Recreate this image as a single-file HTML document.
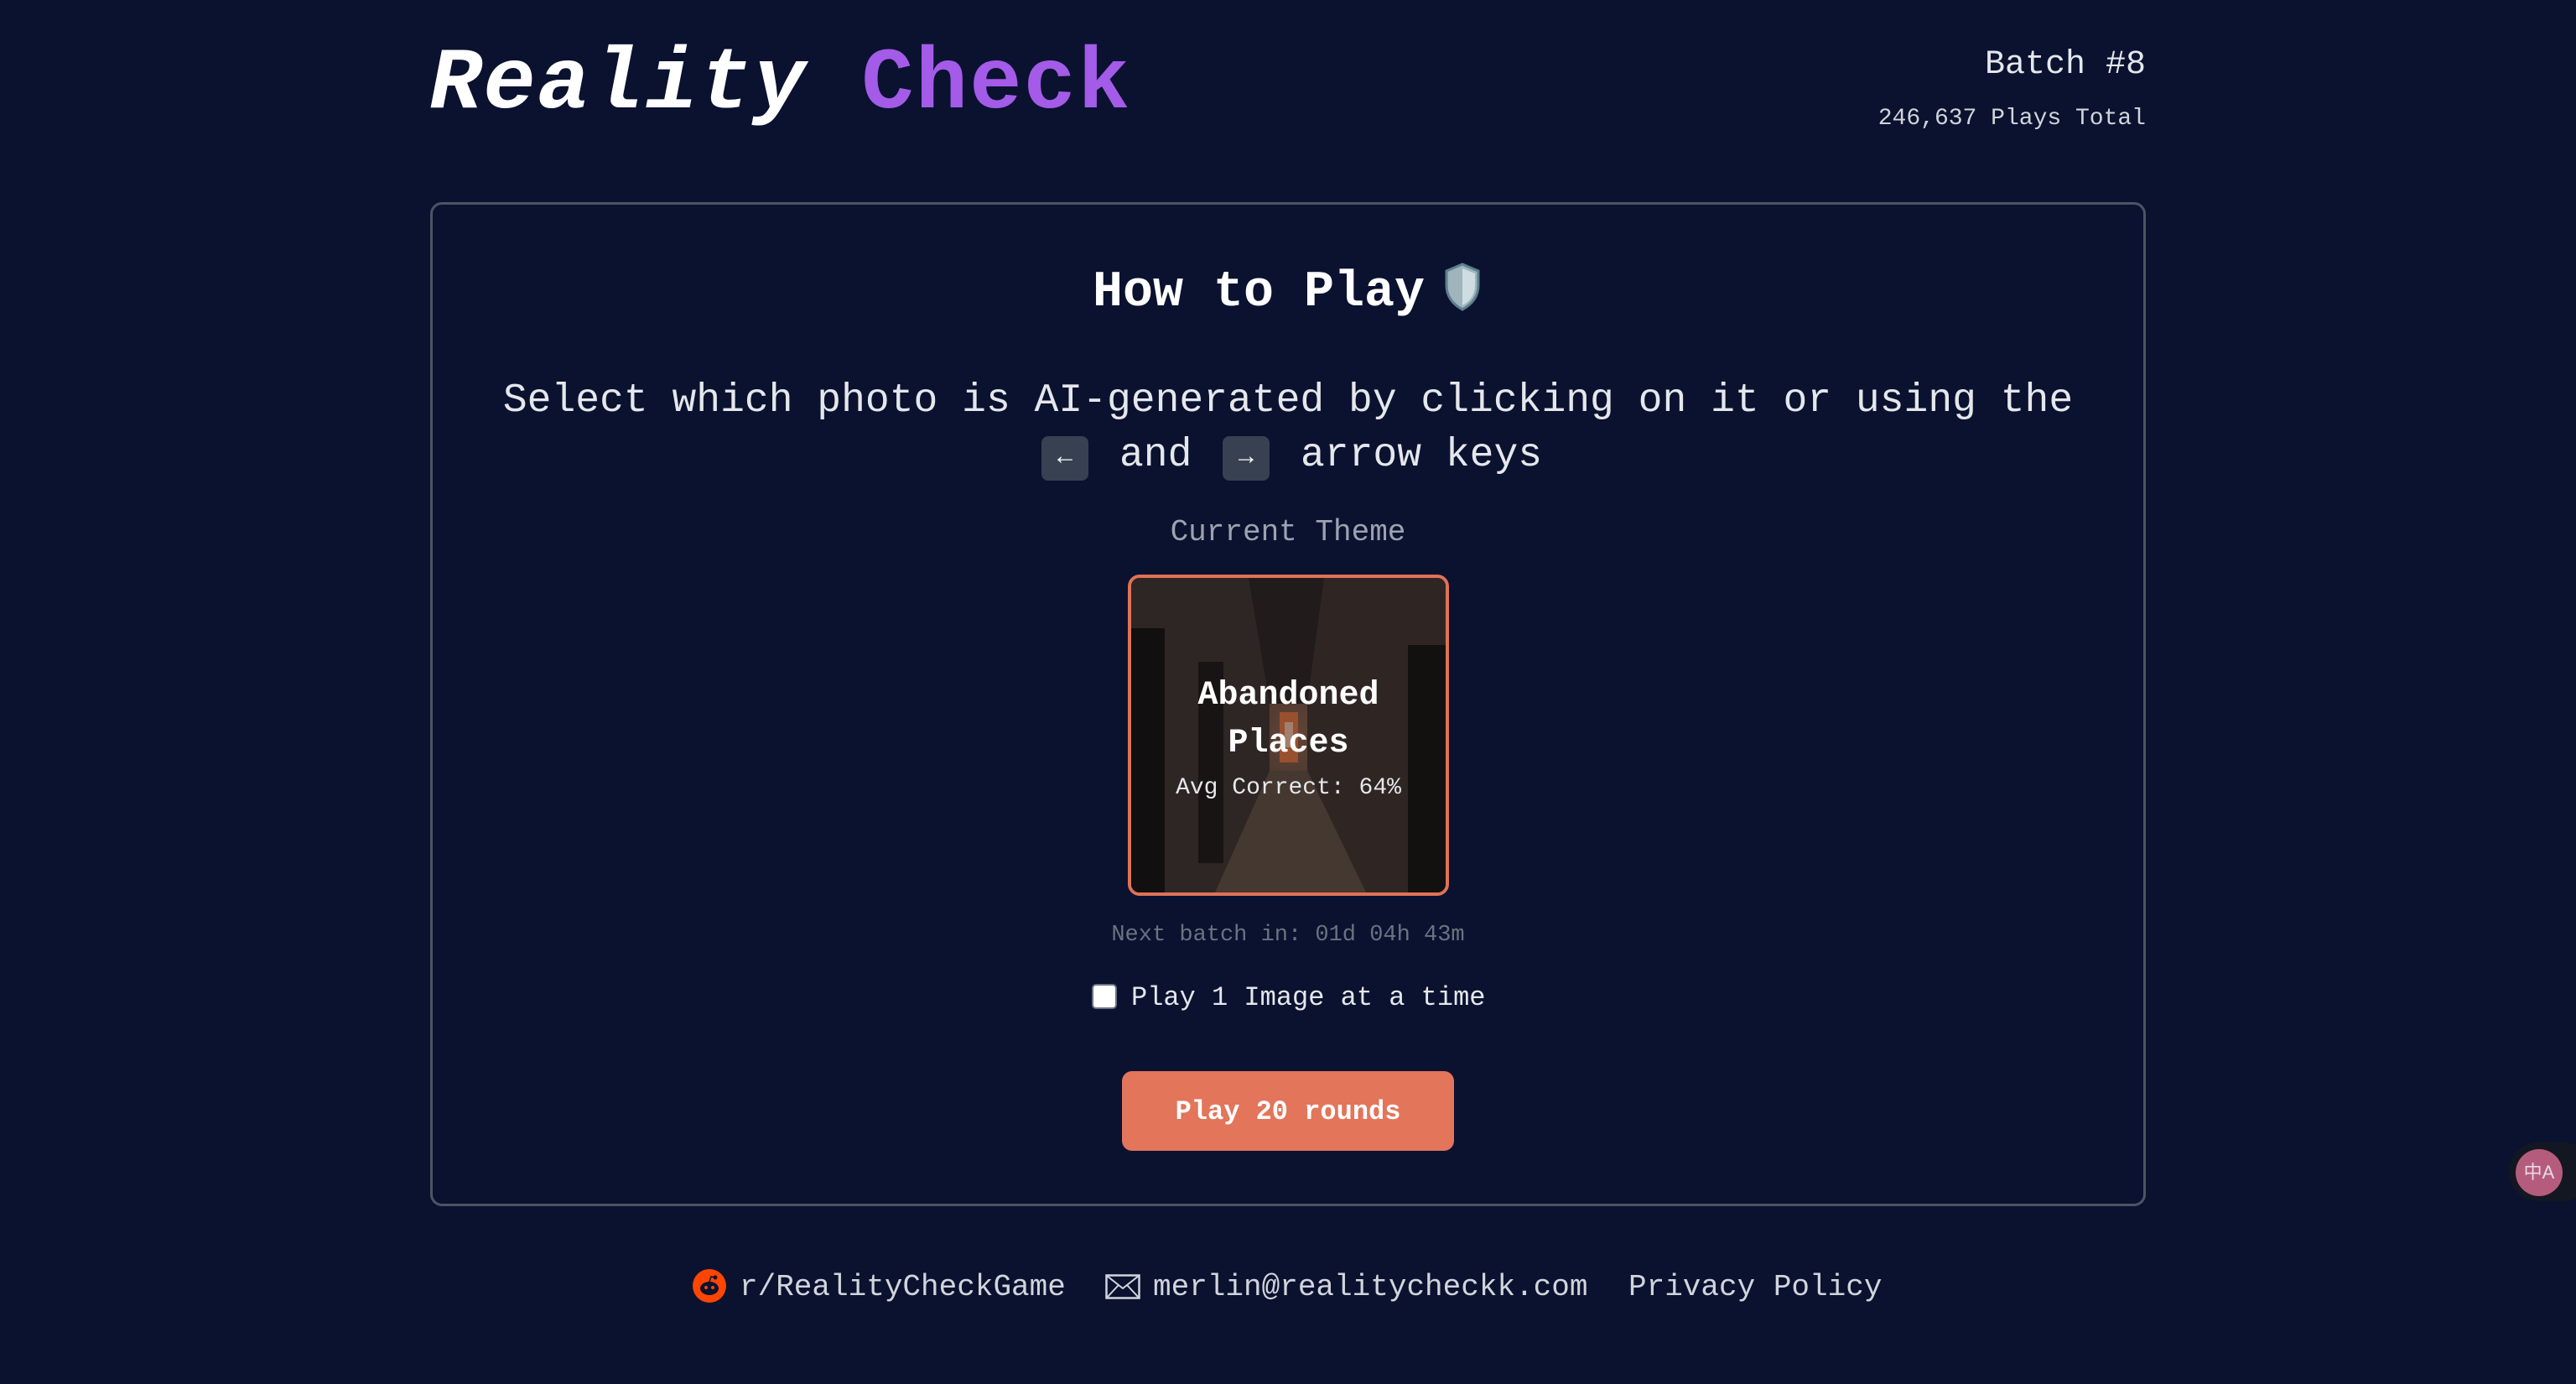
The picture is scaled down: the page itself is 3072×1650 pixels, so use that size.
<!DOCTYPE html>
<html><head><meta charset="utf-8"><style>
*{margin:0;padding:0;box-sizing:border-box}
body{width:3072px;height:1650px;background:#0a1230;font-family:"Liberation Mono",monospace;color:#fff;position:relative;overflow:hidden}
.a{position:absolute;white-space:nowrap}
.c{left:0;width:3072px;text-align:center}
</style></head><body>
<div class="a" style="left:512px;top:36px;font-size:104px;font-weight:bold;font-style:italic;line-height:130px;letter-spacing:2px">Reality <span style="color:#a35be8;font-style:normal">Check</span></div>
<div class="a" style="right:513px;top:52px;font-size:40px;line-height:52px;color:#e5e7eb">Batch #8</div>
<div class="a" style="right:513px;top:124px;font-size:28px;line-height:36px;color:#d1d5db">246,637 Plays Total</div>

<div class="a" style="left:513px;top:241px;width:2046px;height:1197px;border:3px solid #4b5563;border-radius:14px"></div>

<div class="a c" style="top:309px;font-size:60px;font-weight:bold;line-height:80px">How to Play <svg width="50" height="60" viewBox="0 0 50 60" style="vertical-align:-8px;margin-left:-16px"><path d="M25 3 L44 11 L44 28 C44 42 36 51 25 57 C14 51 6 42 6 28 L6 11 Z" fill="#9fb4bd" stroke="#5d7f8c" stroke-width="3"/><path d="M25 8 L40 14 L40 28 C40 40 33 48 25 52 Z" fill="#cfdde2"/></svg></div>
<div class="a c" style="top:446px;font-size:48px;line-height:64px;color:#e5e7eb">Select which photo is AI-generated by clicking on it or using the</div>
<div class="a" style="left:1242px;top:520px;width:56px;height:53px;background:#374151;border-radius:8px;color:#fff;font-size:30px;text-align:center;line-height:53px">←</div>
<div class="a" style="left:1335px;top:511px;font-size:48px;line-height:64px;color:#e5e7eb">and</div>
<div class="a" style="left:1458px;top:520px;width:56px;height:53px;background:#374151;border-radius:8px;color:#fff;font-size:30px;text-align:center;line-height:53px">→</div>
<div class="a" style="left:1551px;top:511px;font-size:48px;line-height:64px;color:#e5e7eb">arrow keys</div>

<div class="a c" style="top:612px;font-size:36px;line-height:46px;color:#9ca3af">Current Theme</div>

<div class="a" style="left:1345px;top:685px;width:383px;height:383px;border:4px solid #e07256;border-radius:14px;overflow:hidden;background:#2a2220">
<svg width="375" height="375" viewBox="0 0 375 375" style="position:absolute;left:0;top:0">
<defs><radialGradient id="g" cx="0.52" cy="0.5" r="0.6"><stop offset="0" stop-color="#7a5646"/><stop offset="0.5" stop-color="#4a3832"/><stop offset="1" stop-color="#1c1818"/></radialGradient></defs>
<rect width="375" height="375" fill="url(#g)"/>
<polygon points="0,0 140,0 165,150 165,230 130,375 0,375" fill="#3a302e"/>
<polygon points="375,0 230,0 210,150 210,230 250,375 375,375" fill="#3b302e"/>
<polygon points="140,0 230,0 210,150 165,150" fill="#2a2222"/>
<polygon points="165,230 210,230 280,375 100,375" fill="#55463c"/>
<rect x="177" y="160" width="22" height="60" fill="#c0643a"/>
<rect x="183" y="172" width="10" height="30" fill="#c8a08a"/>
<rect x="0" y="60" width="40" height="315" fill="#161313"/>
<rect x="80" y="100" width="30" height="240" fill="#1e1919"/>
<rect x="330" y="80" width="45" height="295" fill="#181414"/>
</svg>
<div style="position:absolute;left:0;top:0;width:100%;height:100%;background:rgba(0,0,0,0.2)"></div>
<div style="position:absolute;left:0;width:100%;top:112px;text-align:center;font-size:40px;font-weight:bold;line-height:57px">Abandoned<br>Places</div>
<div style="position:absolute;left:0;width:100%;top:233px;text-align:center;font-size:28px;line-height:36px;color:#e5e7eb">Avg Correct: 64%</div>
</div>

<div class="a c" style="top:1098px;font-size:27px;line-height:34px;color:#6b7280">Next batch in: 01d 04h 43m</div>
<div class="a" style="left:1302px;top:1173px;width:30px;height:30px;background:#fff;border:2px solid #6b7280;border-radius:5px"></div>
<div class="a" style="left:1349px;top:1169px;font-size:32px;line-height:42px;color:#e5e7eb">Play 1 Image at a time</div>
<div class="a" style="left:1338px;top:1277px;width:396px;height:95px;background:#e2755a;border-radius:12px;font-size:32px;font-weight:bold;text-align:center;line-height:97px">Play 20 rounds</div>

<div class="a" style="left:826px;top:1513px;width:40px;height:40px;border-radius:50%;background:#ff4500"><svg width="40" height="40" viewBox="0 0 40 40"><ellipse cx="20" cy="23" rx="11" ry="8" fill="#0a1230"/><circle cx="16" cy="22" r="2" fill="#ff4500"/><circle cx="24" cy="22" r="2" fill="#ff4500"/><circle cx="27" cy="10" r="2.5" fill="#0a1230"/><path d="M20 15 L22 9 L27 10" stroke="#0a1230" stroke-width="1.5" fill="none"/></svg></div>
<div class="a" style="left:882px;top:1511px;font-size:36px;line-height:48px;color:#d1d5db">r/RealityCheckGame</div>
<svg class="a" style="left:1318px;top:1519px" width="42" height="30" viewBox="0 0 42 30"><rect x="1.5" y="1.5" width="39" height="27" fill="none" stroke="#d1d5db" stroke-width="2.5"/><path d="M2 2 L21 17 L40 2 M2 28 L16 13 M40 28 L26 13" stroke="#d1d5db" stroke-width="2" fill="none"/></svg>
<div class="a" style="left:1375px;top:1511px;font-size:36px;line-height:48px;color:#d1d5db">merlin@realitycheckk.com</div>
<div class="a" style="left:1942px;top:1511px;font-size:36px;line-height:48px;color:#d1d5db">Privacy Policy</div>

<div class="a" style="left:2992px;top:1362px;width:100px;height:70px;background:#131722;border-radius:35px"></div>
<div class="a" style="left:3000px;top:1370px;width:56px;height:56px;border-radius:50%;background:#b55c7d;color:#e6dbe2;font-size:22px;font-family:'Liberation Sans','Noto Sans CJK SC',sans-serif;line-height:56px;text-align:center">中A</div>
</body></html>
